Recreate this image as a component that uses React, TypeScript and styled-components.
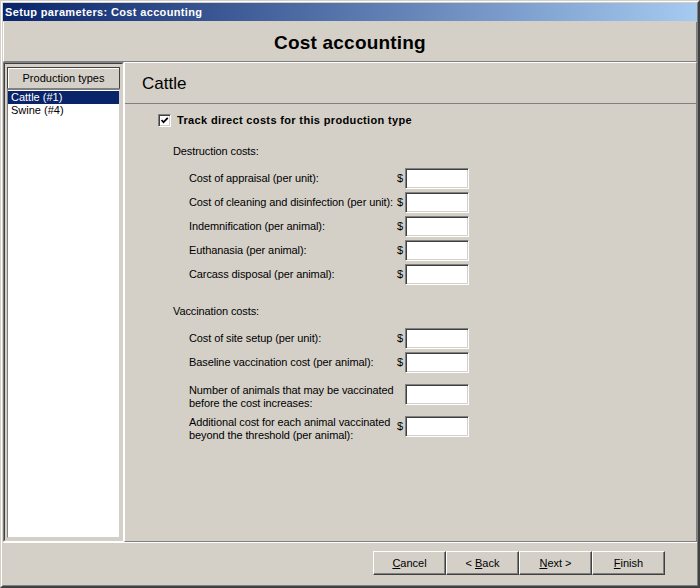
import React from "react";
import styled, { createGlobalStyle } from "styled-components";

const Global = createGlobalStyle`
  html, body { margin: 0; padding: 0; background: #d4d0c8; }
  body { font-family: "Liberation Sans", Arial, sans-serif; font-size: 11px; color: #000; }
`;

const Window = styled.div`
  width: 700px;
  height: 588px;
  box-sizing: border-box;
  border: 1px solid;
  border-color: #d4d0c8 #404040 #404040 #d4d0c8;
`;

const Frame = styled.div`
  height: 100%;
  box-sizing: border-box;
  border: 1px solid;
  border-color: #ffffff #404040 #404040 #ffffff;
`;

const Inner = styled.div`
  height: 100%;
  box-sizing: border-box;
  border: 1px solid;
  border-color: #d4d0c8 #808080 #808080 #d4d0c8;
  background: #d4d0c8;
  display: flex;
  flex-direction: column;
`;

const TitleBar = styled.div`
  height: 18px;
  flex: none;
  margin-bottom: 1px;
  padding-left: 2px;
  display: flex;
  align-items: center;
  background: linear-gradient(to right, #0a246a, #a6caf0);
  color: #fff;
  font-weight: bold;
  font-size: 11px;
  letter-spacing: 0.35px;
`;

const Header = styled.div`
  height: 40px;
  flex: none;
  box-sizing: border-box;
  border-left: 1px solid #fff;
  border-right: 1px solid #808080;
  border-bottom: 1px solid #808080;
  display: flex;
  align-items: center;
  justify-content: center;
  padding-top: 3px;
  font-size: 19px;
  font-weight: bold;
  letter-spacing: 0.2px;
`;

const Main = styled.div`
  height: 480px;
  flex: none;
  display: flex;
`;

const LeftPanel = styled.div`
  width: 121px;
  flex: none;
  box-sizing: border-box;
  border: 1px solid;
  border-color: #808080 #ffffff #ffffff #808080;
  display: flex;
`;

const LeftInner = styled.div`
  flex: 1;
  box-sizing: border-box;
  border: 1px solid;
  border-color: #404040 #d4d0c8 #d4d0c8 #404040;
  padding: 3px 2px 2px 2px;
  display: flex;
  flex-direction: column;
`;

const ListHeader = styled.div`
  height: 22px;
  flex: none;
  box-sizing: border-box;
  border: 1px solid;
  border-color: #404040 #404040 #808080 #404040;
  box-shadow: inset 1px 1px #ffffff;
  display: flex;
  align-items: center;
  justify-content: center;
`;

const List = styled.div`
  flex: 1;
  background: #fff;
  box-sizing: border-box;
  border: 1px solid;
  border-color: #808080 #d4d0c8 #d4d0c8 #808080;
  padding: 1px 0 0 0;
`;

const ListItem = styled.div<{ $selected?: boolean }>`
  height: 13px;
  line-height: 13px;
  padding-left: 3px;
  background: ${(p) => (p.$selected ? "#0a246a" : "transparent")};
  color: ${(p) => (p.$selected ? "#fff" : "#000")};
`;

const RightPanel = styled.div`
  flex: 1;
  box-sizing: border-box;
  border: 1px solid;
  border-color: #ffffff #808080 #808080 #ffffff;
  display: flex;
  flex-direction: column;
`;

const PanelTitle = styled.div`
  height: 41px;
  flex: none;
  box-sizing: border-box;
  border-bottom: 1px solid #808080;
  display: flex;
  align-items: center;
  padding: 2px 0 0 17px;
  font-size: 17px;
`;

const Body = styled.div`
  flex: 1;
  padding: 10px 0 0 33px;
  display: flex;
  flex-direction: column;
  align-items: flex-start;
`;

const CheckRow = styled.div`
  display: flex;
  align-items: center;
  gap: 6px;
  height: 13px;
`;

const sunken = `
  box-sizing: border-box;
  border: 1px solid;
  border-color: #808080 #ffffff #ffffff #808080;
  box-shadow: inset 1px 1px #404040, inset -1px -1px #d4d0c8;
  background: #fff;
`;

const CheckBox = styled.div`
  width: 13px;
  height: 13px;
  ${sunken}
  display: flex;
  align-items: center;
  justify-content: center;
`;

const CheckLabel = styled.span`
  font-weight: bold;
  letter-spacing: 0.35px;
  line-height: 13px;
`;

const SectionLabel = styled.div<{ $top: number }>`
  margin-top: ${(p) => p.$top}px;
  margin-left: 15px;
  line-height: 13px;
  letter-spacing: -0.1px;
`;

const FieldList = styled.div`
  margin-top: 10px;
  margin-left: 31px;
  display: flex;
  flex-direction: column;
  gap: 3px;
`;

const FieldRow = styled.div<{ $extra?: number }>`
  display: grid;
  grid-template-columns: 208px 8px 64px;
  align-items: start;
  margin-top: ${(p) => p.$extra ?? 0}px;
`;

const FieldLabel = styled.div<{ $multi?: boolean }>`
  line-height: ${(p) => (p.$multi ? "13px" : "21px")};
  white-space: nowrap;
  letter-spacing: -0.1px;
`;

const Dollar = styled.span`
  line-height: 21px;
`;

const Input = styled.input`
  width: 64px;
  height: 21px;
  ${sunken}
  padding: 0 2px;
  margin: 0;
  outline: none;
  font: inherit;
`;

const Footer = styled.div`
  flex: 1;
  box-sizing: border-box;
  border-top: 1px solid #fff;
  display: flex;
  justify-content: flex-end;
  align-items: flex-start;
  padding: 8px 32px 0 0;
`;

const Button = styled.button`
  width: 73px;
  height: 24px;
  box-sizing: border-box;
  margin: 0;
  padding: 0;
  background: #d4d0c8;
  border: 1px solid;
  border-color: #ffffff #404040 #404040 #ffffff;
  box-shadow: inset -1px -1px #808080;
  font-family: "Liberation Sans", Arial, sans-serif;
  font-size: 11px;
  color: #000;
  display: flex;
  align-items: center;
  justify-content: center;
`;

type Field = { label: React.ReactNode; dollar?: boolean; multi?: boolean; extra?: number };

const destruction: Field[] = [
  { label: "Cost of appraisal (per unit):", dollar: true },
  { label: "Cost of cleaning and disinfection (per unit):", dollar: true },
  { label: "Indemnification (per animal):", dollar: true },
  { label: "Euthanasia (per animal):", dollar: true },
  { label: "Carcass disposal (per animal):", dollar: true },
];

const vaccination: Field[] = [
  { label: "Cost of site setup (per unit):", dollar: true },
  { label: "Baseline vaccination cost (per animal):", dollar: true },
  {
    label: (
      <>
        Number of animals that may be vaccinated
        <br />
        before the cost increases:
      </>
    ),
    multi: true,
    extra: 8,
  },
  {
    label: (
      <>
        Additional cost for each animal vaccinated
        <br />
        beyond the threshold (per animal):
      </>
    ),
    dollar: true,
    multi: true,
    extra: 3,
  },
];

const Fields = ({ items }: { items: Field[] }) => (
  <FieldList>
    {items.map((f, i) => (
      <FieldRow key={i} $extra={f.extra}>
        <FieldLabel $multi={f.multi}>{f.label}</FieldLabel>
        <Dollar>{f.dollar ? "$" : ""}</Dollar>
        <Input defaultValue="" />
      </FieldRow>
    ))}
  </FieldList>
);

export default function App() {
  return (
    <>
      <Global />
      <Window>
        <Frame>
          <Inner>
            <TitleBar>Setup parameters: Cost accounting</TitleBar>
            <Header>Cost accounting</Header>
            <Main>
              <LeftPanel>
                <LeftInner>
                  <ListHeader>Production types</ListHeader>
                  <List>
                    <ListItem $selected>Cattle (#1)</ListItem>
                    <ListItem>Swine (#4)</ListItem>
                  </List>
                </LeftInner>
              </LeftPanel>
              <RightPanel>
                <PanelTitle>Cattle</PanelTitle>
                <Body>
                  <CheckRow>
                    <CheckBox>
                      <svg width="9" height="9" viewBox="0 0 9 9">
                        <path d="M1.5 4 L3.5 6.2 L7.8 1.8" fill="none" stroke="#000" strokeWidth="1.7" />
                      </svg>
                    </CheckBox>
                    <CheckLabel>Track direct costs for this production type</CheckLabel>
                  </CheckRow>
                  <SectionLabel $top={18}>Destruction costs:</SectionLabel>
                  <Fields items={destruction} />
                  <SectionLabel $top={20}>Vaccination costs:</SectionLabel>
                  <Fields items={vaccination} />
                </Body>
              </RightPanel>
            </Main>
            <Footer>
              <Button>
                <span><u>C</u>ancel</span>
              </Button>
              <Button>
                <span>&lt; <u>B</u>ack</span>
              </Button>
              <Button>
                <span><u>N</u>ext &gt;</span>
              </Button>
              <Button>
                <span><u>F</u>inish</span>
              </Button>
            </Footer>
          </Inner>
        </Frame>
      </Window>
    </>
  );
}
